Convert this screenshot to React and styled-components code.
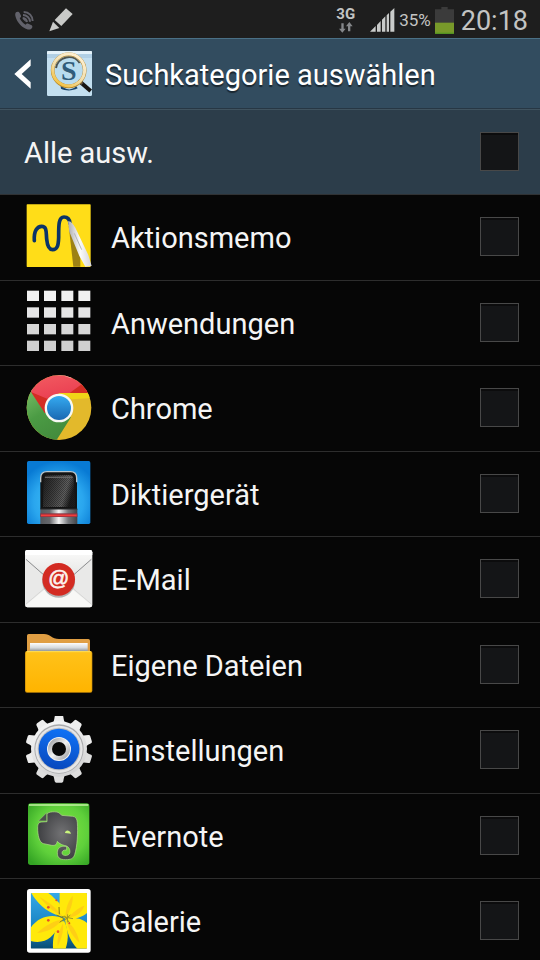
import { useState } from 'react';
import styled, { createGlobalStyle } from 'styled-components';

/* ---------- status bar icons ---------- */

const PhoneIcon = () => (
  <svg width="19" height="19" viewBox="0 0 57 57" aria-hidden="true">
    <path
      d="M3 4 C7 1 12 2 14 6 L18 14 C19 17 17 19 14 21 C17 29 24 37 32 41 C34 38 37 36 40 38 L50 43 C54 46 52 51 48 54 C42 58 34 54 27 50 C14 42 4 28 1 14 C0 9 1 6 3 4 Z"
      fill="#62626b"
    />
    <path d="M23 21 C30 22 35 27 36 33 M24 12 C35 12 45 21 45 32 M26 3 C42 3 53 15 53 30" fill="none" stroke="#62626b" strokeWidth="6" />
    <path d="M24 25 L32 33 L30 24 Z" fill="#62626b" />
  </svg>
);

const PencilIcon = () => (
  <svg width="24" height="24" viewBox="0 0 72 72" aria-hidden="true">
    <path d="M51 1 L71 18 L37 54 L17 36 Z" fill="#c9cac8" />
    <path d="M12 41 L31 60 L1 70 Z" fill="#c9cac8" />
  </svg>
);

const DataArrows = () => (
  <svg width="14" height="11" viewBox="0 0 42 33" aria-hidden="true">
    <path d="M7 4 H14 V20 H20 L10 32 L0 20 H7 Z" fill="#85878a" />
    <path d="M27 28 H34 V13 H41 L31 0 L21 13 H27 Z" fill="#85878a" />
  </svg>
);

const SignalIcon = () => (
  <svg width="25" height="24" viewBox="0 0 75 72" aria-hidden="true">
    <path d="M0 71 L17 54 V71 Z M21 51 L32 39 V71 H21 Z M36 35 L46 25 V71 H36 Z M50 22 L57 15 V71 H50 Z M61 11 L73 0 V71 H61 Z" fill="#c9cbca" />
  </svg>
);

const BatteryIcon = () => (
  <svg width="19" height="27" viewBox="0 0 57 81" aria-hidden="true">
    <path d="M19 0 H38 V7 H57 V80 H0 V7 H19 Z" fill="#3b3b3b" />
    <path d="M0 47 H57 V80 H0 Z" fill="#78992a" />
    <path d="M0 77 H57 V80 H0 Z" fill="#4f9f1c" />
  </svg>
);

/* ---------- header icons ---------- */

const BackIcon = () => (
  <svg width="18" height="30" viewBox="0 0 54 90" aria-hidden="true">
    <path d="M50 1 V20 L23 45 L50 70 V89 L1 45 Z" fill="#fff" />
  </svg>
);

const FinderIcon = () => (
  <svg width="45" height="45" viewBox="0 0 135 135" aria-hidden="true">
    <defs>
      <linearGradient id="finderRing" x1="0.8" y1="0" x2="0.2" y2="1">
        <stop offset="0" stopColor="#fff0d2" />
        <stop offset="0.55" stopColor="#f2dfae" />
        <stop offset="1" stopColor="#f3c03c" />
      </linearGradient>
    </defs>
    <rect width="135" height="135" rx="4" fill="#c3dff0" />
    <path d="M0 4 Q0 0 4 0 H131 Q135 0 135 4 V9 H0 Z" fill="#e4f2fa" />
    <path d="M0 12 H135 M0 18 H135" stroke="#8db4ce" strokeWidth="2" />
    <path d="M40 98 C52 117 72 121 88 106 L92 112 C76 120 55 120 42 113 Z" fill="#17446b" />
    <circle cx="65" cy="58" r="42" fill="#b9dcef" />
    <text x="65" y="88" textAnchor="middle" fontFamily="'Liberation Serif', serif" fontWeight="bold" fontSize="84" fill="#315c7b">
      S
    </text>
    <path d="M99 92 L131 120" stroke="#171513" strokeWidth="12" />
    <path d="M94 88 L106 99" stroke="#635441" strokeWidth="9" />
    <path d="M27 51 A39 39 0 0 1 98 36" fill="none" stroke="#4d5350" strokeWidth="6" />
    <circle cx="65" cy="58" r="48" fill="none" stroke="#b0862e" strokeWidth="11" />
    <circle cx="65" cy="57" r="48" fill="none" stroke="url(#finderRing)" strokeWidth="9" />
  </svg>
);

/* ---------- app icons, all drawn on a 204 grid ---------- */

const AppIcon = ({ children }) => (
  <svg width="68" height="68" viewBox="0 0 204 204" aria-hidden="true">
    {children}
  </svg>
);

const MemoIcon = () => (
  <AppIcon>
    <defs>
      <linearGradient id="memoPen" x1="0" y1="0.5" x2="1" y2="0.4">
        <stop offset="0" stopColor="#a5a5a8" />
        <stop offset="0.5" stopColor="#fafafa" />
        <stop offset="1" stopColor="#cfcfd2" />
      </linearGradient>
    </defs>
    <rect x="5" y="4" width="192" height="188" rx="2" fill="#ffdd18" />
    <path d="M131 68 L166 140 V191 H145 Z" fill="#9d8114" />
    <path
      d="M28 113 C26 83 37 70 50 70 C66 70 63 88 65 108 C67 129 72 140 83 140 C97 140 100 128 101 103 C101 69 100 42 117 42 C128 42 134 50 135 61"
      fill="none"
      stroke="#0b3468"
      strokeWidth="11"
      strokeLinecap="round"
    />
    <path d="M129 55 C137 52 144 63 151 74 L190 156 L200 189 L181 191 L163 159 L133 86 Z" fill="url(#memoPen)" />
    <path d="M148 91 L170 140" stroke="#b4b5b8" strokeWidth="3" />
  </AppIcon>
);

const GRID_X = [6, 57, 109, 160];
const GRID_ROWS = [
  { y: 8, fill: '#f1f1f1' },
  { y: 58, fill: '#e5e5e6' },
  { y: 108, fill: '#d6d6d6' },
  { y: 158, fill: '#cfcfcf' },
];

const AppsIcon = () => (
  <AppIcon>
    {GRID_ROWS.map((row) =>
      GRID_X.map((x) => <rect key={`${x}-${row.y}`} x={x} y={row.y} width="36" height="31" fill={row.fill} />)
    )}
  </AppIcon>
);

const ChromeIcon = () => (
  <AppIcon>
    <defs>
      <clipPath id="chromeDisc">
        <circle cx="102" cy="101" r="97" />
      </clipPath>
      <linearGradient id="chromeBlue" x1="0" y1="0" x2="0" y2="1">
        <stop offset="0" stopColor="#35aaf0" />
        <stop offset="1" stopColor="#1968b2" />
      </linearGradient>
      <linearGradient id="chromeGreen" x1="0" y1="0" x2="0.5" y2="1">
        <stop offset="0" stopColor="#7fc36c" />
        <stop offset="0.55" stopColor="#4b9b44" />
        <stop offset="1" stopColor="#438c3d" />
      </linearGradient>
      <linearGradient id="chromeRed" x1="0.2" y1="0" x2="0.6" y2="1">
        <stop offset="0" stopColor="#f25b61" />
        <stop offset="0.5" stopColor="#ec4555" />
        <stop offset="1" stopColor="#d52b22" />
      </linearGradient>
    </defs>
    <g clipPath="url(#chromeDisc)">
      <rect width="204" height="204" fill="#e3b92b" />
      <path d="M0 30 H24 L64 120 L138 130 L91 204 H0 Z" fill="url(#chromeGreen)" />
      <path d="M0 0 H204 V57 H102 L60 118 L18 52 Z" fill="url(#chromeRed)" />
      <path d="M134 57 L176 26 L204 57 Z" fill="#d32d24" />
      <path d="M18 54 L60 118 L70 76 Z" fill="#d32d24" />
      <path d="M102 57 H204 V72 L141 76 Z" fill="#f0d418" />
      <path d="M40 20 A97 97 0 0 1 140 12" fill="none" stroke="#f3a9a6" strokeWidth="4" />
    </g>
    <circle cx="102" cy="102" r="43" fill="#f8f8f4" />
    <circle cx="102" cy="102" r="36" fill="url(#chromeBlue)" />
  </AppIcon>
);

const RecorderIcon = () => (
  <AppIcon>
    <defs>
      <radialGradient id="recBack" cx="0.5" cy="0.65" r="0.65">
        <stop offset="0" stopColor="#40c4f8" />
        <stop offset="0.6" stopColor="#2aa6ee" />
        <stop offset="1" stopColor="#087ad4" />
      </radialGradient>
      <linearGradient id="recBase" x1="0" y1="0" x2="1" y2="0">
        <stop offset="0" stopColor="#56585d" />
        <stop offset="0.25" stopColor="#66686c" />
        <stop offset="0.5" stopColor="#f4f4f4" />
        <stop offset="0.75" stopColor="#77797d" />
        <stop offset="1" stopColor="#414348" />
      </linearGradient>
      <linearGradient id="recHead" x1="0" y1="0" x2="1" y2="0.3">
        <stop offset="0" stopColor="#1b1b1b" />
        <stop offset="0.5" stopColor="#434343" />
        <stop offset="0.78" stopColor="#606060" />
        <stop offset="1" stopColor="#1d1d1d" />
      </linearGradient>
      <pattern id="recMesh" width="6" height="6" patternUnits="userSpaceOnUse">
        <rect width="3" height="3" fill="#101010" fillOpacity="0.4" />
        <rect x="3" y="3" width="3" height="3" fill="#101010" fillOpacity="0.4" />
      </pattern>
    </defs>
    <rect x="6" y="6" width="190" height="189" rx="5" fill="url(#recBack)" />
    <path d="M46 150 V57 Q46 38 65 38 H137 Q156 38 156 57 V150 Z" fill="#141414" />
    <path d="M47 70 V57 Q47 38 66 38 H136 Q155 38 155 57 V70" fill="none" stroke="#b9c6cd" strokeWidth="4" />
    <path d="M54 144 L56 60 Q57 48 70 48 H132 Q145 48 146 60 L150 144 Z" fill="url(#recHead)" />
    <path d="M54 144 L56 60 Q57 48 70 48 H132 Q145 48 146 60 L150 144 Z" fill="url(#recMesh)" />
    <path d="M60 55 H143" stroke="#666" strokeWidth="4" />
    <rect x="46" y="150" width="111" height="45" fill="url(#recBase)" />
    <path d="M46 150 H157" stroke="#292a2d" strokeWidth="3" />
    <rect x="46" y="163" width="111" height="11" fill="#8d3340" />
    <path d="M48 169 H155" stroke="#f33d3a" strokeWidth="5" />
  </AppIcon>
);

const MailIcon = () => (
  <AppIcon>
    <defs>
      <linearGradient id="mailFlap" x1="0" y1="0" x2="0" y2="1">
        <stop offset="0" stopColor="#fbfbfa" />
        <stop offset="1" stopColor="#dededd" />
      </linearGradient>
    </defs>
    <rect x="0" y="15" width="202" height="172" rx="7" fill="#e9e9e8" />
    <path d="M2 180 L78 118 H124 L200 180 Q201 187 195 187 H7 Q1 187 2 180 Z" fill="#f8f8f6" />
    <path d="M2 178 L70 120 M200 178 L132 120" stroke="#cfcfcd" strokeWidth="2" />
    <path d="M2 40 L101 122 L200 40 V22 Q200 15 193 15 H8 Q2 15 2 22 Z" fill="url(#mailFlap)" />
    <path d="M3 43 L60 93 M199 43 L142 93" stroke="#8c8d8f" strokeWidth="3" />
    <path d="M0 30 V22 Q0 15 7 15 H195 Q202 15 202 22 V30 Z" fill="#fff" />
    <circle cx="101" cy="109" r="49" fill="#8e8f90" fillOpacity="0.65" />
    <circle cx="101" cy="103" r="49" fill="#d32b22" />
    <text
      x="101"
      y="120"
      textAnchor="middle"
      fontFamily="'Liberation Sans', sans-serif"
      fontSize="62"
      fill="#fdf3ee"
      stroke="#fdf3ee"
      strokeWidth="2"
    >
      @
    </text>
  </AppIcon>
);

const FolderIcon = () => (
  <AppIcon>
    <defs>
      <linearGradient id="folderPaper" x1="0" y1="0" x2="0" y2="1">
        <stop offset="0" stopColor="#fdfdfd" />
        <stop offset="0.55" stopColor="#d5d9dd" />
        <stop offset="1" stopColor="#868a8e" />
      </linearGradient>
      <linearGradient id="folderFront" x1="0" y1="0" x2="0" y2="1">
        <stop offset="0" stopColor="#ffc21a" />
        <stop offset="1" stopColor="#ffb400" />
      </linearGradient>
    </defs>
    <path d="M6 80 V17 Q6 12 11 12 H57 C76 12 80 27 102 27 H190 Q195 27 195 32 V80 Z" fill="#e09e43" />
    <rect x="15" y="39" width="173" height="26" fill="url(#folderPaper)" />
    <rect x="0" y="63" width="202" height="125" rx="6" fill="#c78a0a" />
    <rect x="2" y="64" width="198" height="122" rx="5" fill="url(#folderFront)" />
    <path d="M5 65 H197" stroke="#ffe05a" strokeWidth="3" />
  </AppIcon>
);

const TEETH = [0, 36, 72, 108, 144, 180, 216, 252, 288, 324];

const SettingsIcon = () => (
  <AppIcon>
    <defs>
      <linearGradient id="gearBody" x1="0" y1="0" x2="0.4" y2="1">
        <stop offset="0" stopColor="#fafafa" />
        <stop offset="1" stopColor="#d5d5d6" />
      </linearGradient>
      <linearGradient id="gearBlue" x1="0.6" y1="0" x2="0.4" y2="1">
        <stop offset="0" stopColor="#0f72f6" />
        <stop offset="1" stopColor="#0848bd" />
      </linearGradient>
      <linearGradient id="gearHub" x1="0" y1="0" x2="1" y2="1">
        <stop offset="0" stopColor="#8c8d90" />
        <stop offset="0.5" stopColor="#f1f1f1" />
        <stop offset="1" stopColor="#929396" />
      </linearGradient>
    </defs>
    {TEETH.map((angle) => (
      <path
        key={angle}
        d="M76 32 C86 22 87 14 89 2 Q90 -2 94 -2 H110 Q114 -2 115 2 C117 14 118 22 128 32 Z"
        transform={`rotate(${angle} 102 99)`}
        fill={angle > 90 && angle < 250 ? '#dedede' : '#ededed'}
      />
    ))}
    <circle cx="102" cy="99" r="84" fill="url(#gearBody)" />
    <circle cx="102" cy="99" r="74" fill="#a9aaac" />
    <circle cx="102" cy="100" r="71" fill="#e6e6e7" />
    <circle cx="102" cy="99" r="64" fill="#bcbdc0" />
    <circle cx="102" cy="99" r="61" fill="url(#gearBlue)" />
    <circle cx="102" cy="99" r="36" fill="#f2f2f2" />
    <circle cx="102" cy="99" r="33" fill="url(#gearHub)" />
    <circle cx="102" cy="99" r="21" fill="#080808" />
  </AppIcon>
);

const EvernoteIcon = () => (
  <AppIcon>
    <defs>
      <radialGradient id="everBack" cx="0.55" cy="0.45" r="0.7">
        <stop offset="0" stopColor="#82e83f" />
        <stop offset="0.6" stopColor="#5fd03b" />
        <stop offset="1" stopColor="#34a424" />
      </radialGradient>
      <radialGradient id="everHead" cx="0.6" cy="0.45" r="0.6">
        <stop offset="0" stopColor="#727274" />
        <stop offset="1" stopColor="#3e3f42" />
      </radialGradient>
    </defs>
    <rect x="9" y="7" width="184" height="185" rx="8" fill="url(#everBack)" />
    <path d="M12 12 H190" stroke="#c3f4a2" strokeWidth="5" />
    <path
      d="M66 62 V39 C69 32 94 30 103 36 L110 43 L143 46 C153 47 156 54 157 65 C159 94 157 136 149 161 C145 173 138 176 121 176 C103 176 97 169 97 155 C97 142 105 136 116 136 H125 V147 C116 146 111 150 111 156 C111 162 118 164 125 163 C134 161 136 155 134 146 C131 133 115 134 109 130 C103 127 100 125 97 121 C94 132 91 134 80 133 L56 128 C42 125 38 101 38 81 C38 68 41 64 50 63 Z"
      fill="url(#everHead)"
      stroke="#b5df8c"
      strokeWidth="2"
    />
    <path d="M40 60 L65 35 V60 Z" fill="#4b504c" stroke="#8fc56e" strokeWidth="2" />
    <path d="M120 96 C120 86 134 85 138 98 Z" fill="#c9f57d" />
  </AppIcon>
);

const GalleryIcon = () => (
  <AppIcon>
    <defs>
      <clipPath id="galleryPhoto">
        <rect x="17" y="18" width="169" height="167" rx="3" />
      </clipPath>
      <linearGradient id="gallerySky" x1="0" y1="0" x2="0" y2="1">
        <stop offset="0" stopColor="#35a8e6" />
        <stop offset="0.6" stopColor="#1a83c2" />
        <stop offset="1" stopColor="#084d74" />
      </linearGradient>
    </defs>
    <rect x="6" y="6" width="191" height="191" rx="8" fill="#fff" />
    <g clipPath="url(#galleryPhoto)">
      <rect x="17" y="18" width="169" height="167" fill="url(#gallerySky)" />
      <g fill="#ffe90a">
        <path d="M19 18 H70 C86 30 93 40 103 48 L120 92 L95 84 C62 72 36 48 19 18 Z" />
        <path d="M104 18 H186 V78 C172 90 150 98 125 98 L103 82 Z" />
        <path d="M116 95 C86 80 44 84 17 122 V162 C59 174 88 148 100 118 Z" />
        <path d="M104 106 C89 128 82 155 84 185 H122 C132 153 130 125 117 101 Z" />
        <path d="M120 96 C150 88 174 96 186 108 V185 H157 C137 164 124 136 120 96 Z" />
      </g>
      <g fill="#fec51a" fillOpacity="0.75">
        <path d="M44 30 C68 44 94 61 112 88 C82 72 62 53 44 30 Z" />
        <path d="M143 26 C144 50 136 71 122 91 C121 66 128 46 143 26 Z" />
        <path d="M112 98 C88 100 60 116 36 138 C68 134 92 122 112 98 Z" />
        <path d="M114 110 C102 130 96 155 98 178 C110 153 116 132 114 110 Z" />
        <path d="M126 104 C144 114 158 140 164 168 C145 150 130 128 126 104 Z" />
        <path d="M130 91 C145 76 160 62 178 56 C170 78 153 90 130 91 Z" />
      </g>
      <path d="M95 84 L116 94 M103 82 L102 60 M104 106 L116 97" stroke="#857a16" strokeWidth="3" />
      <path d="M110 88 L144 95 M118 86 L134 108 M136 84 L116 102 M128 82 L127 106" stroke="#a39720" strokeWidth="3" />
      <g fill="#e8502a">
        <circle cx="70" cy="61" r="4" />
        <circle cx="70" cy="100" r="4" />
        <circle cx="133" cy="109" r="3" />
        <circle cx="94" cy="40" r="3" />
        <circle cx="99" cy="134" r="4" />
      </g>
    </g>
  </AppIcon>
);

const CATEGORIES = [
  { id: 'memo', label: 'Aktionsmemo', Icon: MemoIcon },
  { id: 'apps', label: 'Anwendungen', Icon: AppsIcon },
  { id: 'chrome', label: 'Chrome', Icon: ChromeIcon },
  { id: 'recorder', label: 'Diktiergerät', Icon: RecorderIcon },
  { id: 'mail', label: 'E-Mail', Icon: MailIcon },
  { id: 'files', label: 'Eigene Dateien', Icon: FolderIcon },
  { id: 'settings', label: 'Einstellungen', Icon: SettingsIcon },
  { id: 'evernote', label: 'Evernote', Icon: EvernoteIcon },
  { id: 'gallery', label: 'Galerie', Icon: GalleryIcon },
];

const App = () => {
  const [selected, setSelected] = useState([]);
  const allSelected = selected.length === CATEGORIES.length;

  const toggle = (id) => {
    setSelected((prev) => (prev.includes(id) ? prev.filter((item) => item !== id) : [...prev, id]));
  };

  const toggleAll = () => {
    setSelected(allSelected ? [] : CATEGORIES.map((item) => item.id));
  };

  return (
    <Screen>
      <GlobalStyle />
      <StatusBar>
        <StatusGroup $gap={15}>
          <PhoneIcon />
          <PencilIcon />
        </StatusGroup>
        <StatusGroup $gap={4}>
          <Network>
            3G
            <DataArrows />
          </Network>
          <SignalIcon />
          <BatteryLevel>35%</BatteryLevel>
          <BatteryIcon />
          <Clock>20:18</Clock>
        </StatusGroup>
      </StatusBar>
      <Header>
        <BackButton type="button" aria-label="Zurück">
          <BackIcon />
          <FinderIcon />
        </BackButton>
        <Title>Suchkategorie auswählen</Title>
      </Header>
      <SelectAllRow htmlFor="all">
        <Label>Alle ausw.</Label>
        <Checkbox id="all" type="checkbox" checked={allSelected} onChange={toggleAll} />
      </SelectAllRow>
      <List>
        {CATEGORIES.map(({ id, label, Icon }) => (
          <Item key={id}>
            <ItemRow htmlFor={id}>
              <Icon />
              <Label>{label}</Label>
              <Checkbox id={id} type="checkbox" checked={selected.includes(id)} onChange={() => toggle(id)} />
            </ItemRow>
          </Item>
        ))}
      </List>
    </Screen>
  );
};

const GlobalStyle = createGlobalStyle`
  *, *::before, *::after {
    box-sizing: border-box;
  }

  body {
    margin: 0;
    background: #060606;
    color: #f5f5f5;
    font-family: Roboto, 'Noto Sans', sans-serif;
  }

  svg {
    display: block;
    flex: none;
  }
`;

const Screen = styled.main`
  display: flex;
  flex-direction: column;
  height: 100vh;
`;

const StatusBar = styled.div`
  display: flex;
  flex: none;
  align-items: center;
  justify-content: space-between;
  height: 38px;
  padding: 2px 12px 0 15px;
  background: #1e1e1e;
  color: #c3c4c3;
`;

const StatusGroup = styled.div`
  display: flex;
  align-items: center;
  gap: ${({ $gap }) => $gap}px;
`;

const Network = styled.span`
  display: flex;
  flex-direction: column;
  align-items: center;
  gap: 1px;
  margin-right: 11px;
  font-size: 15px;
  line-height: 14px;
  font-weight: 700;
`;

const BatteryLevel = styled.span`
  font-size: 17px;
  line-height: 24px;
`;

const Clock = styled.time`
  margin-left: 3px;
  padding-top: 2px;
  font-size: 27px;
  line-height: 32px;
`;

const Header = styled.header`
  display: flex;
  flex: none;
  align-items: center;
  gap: 13px;
  height: 71px;
  padding: 0 14px;
  background: #324c5f;
  border-top: 1px solid #4a7086;
  border-bottom: 1px solid #273744;
`;

const BackButton = styled.button`
  display: flex;
  align-items: center;
  gap: 15px;
  padding: 0;
  background: none;
  border: none;
  cursor: pointer;
`;

const Title = styled.h1`
  margin: 0;
  padding-top: 2px;
  font-size: 29px;
  line-height: 36px;
  font-weight: 400;
  color: #fff;
  text-shadow: 0 2px 1px rgba(0, 0, 0, 0.5);
`;

const SelectAllRow = styled.label`
  display: flex;
  flex: none;
  align-items: center;
  height: 86px;
  padding: 0 21px 2px 24px;
  background: #2c3d4a;
  border-top: 1px solid #40535f;
  border-bottom: 1px solid #303234;
  cursor: pointer;
`;

const Label = styled.span`
  flex: 1;
  padding-top: 3px;
  font-size: 29px;
  line-height: 36px;
`;

const Checkbox = styled.input`
  appearance: none;
  flex: none;
  width: 39px;
  height: 39px;
  margin: 0;
  background: #141517;
  border: 1px solid #484848;
  box-shadow: inset 0 2px 0 #0c0c0d;
  cursor: pointer;

  &:checked {
    background: #3f8f2d;
  }
`;

const List = styled.ul`
  flex: 1;
  min-height: 0;
  margin: 0;
  padding: 0;
  list-style: none;
  overflow-y: auto;
  scrollbar-width: none;
`;

const Item = styled.li`
  height: 86px;
  border-bottom: 1px solid #2d2d2d;

  &:nth-child(even) {
    height: 85px;
  }
`;

const ItemRow = styled.label`
  display: flex;
  align-items: center;
  gap: 18px;
  height: 100%;
  padding: 0 21px 2px 25px;
  cursor: pointer;
`;

export default App;
